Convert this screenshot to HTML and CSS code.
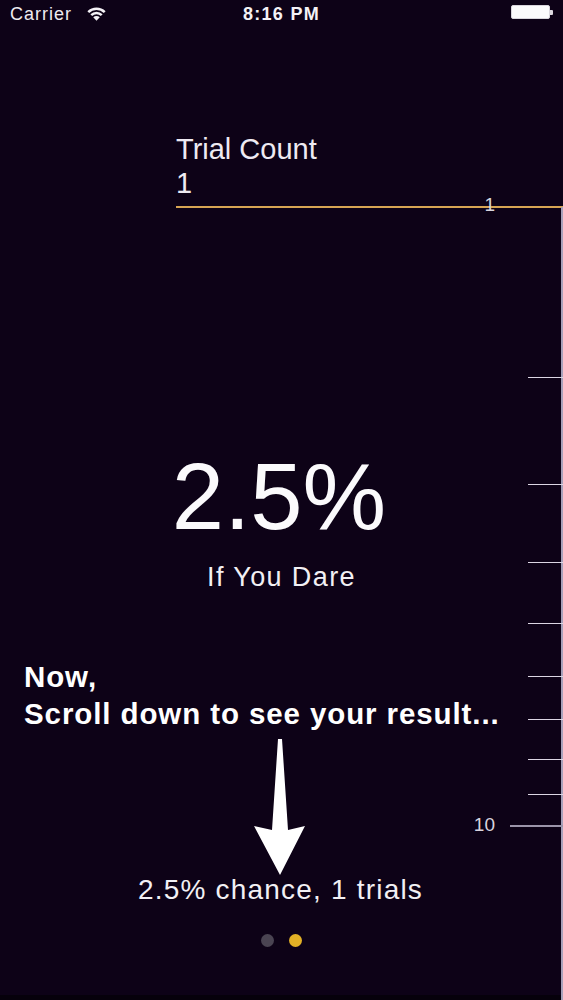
FILE: index.html
```html
<!DOCTYPE html>
<html lang="en">
<head>
<meta charset="utf-8">
<title>Trial Count</title>
<link rel="stylesheet" href="styles.css">
</head>
<body>
<div class="screen">
  <div class="status">
    <div class="status-left">
      <span class="carrier">Carrier</span>
      <svg class="wifi" width="19" height="15" viewBox="0 0 18 14">
        <path d="M9 13.8 L5.9 10.6 A4.4 4.4 0 0 1 12.1 10.6 Z" fill="#f4f2f6"/>
        <path d="M4.05 8.55 A7 7 0 0 1 13.95 8.55" fill="none" stroke="#f4f2f6" stroke-width="2.4"/>
        <path d="M1.22 5.72 A11 11 0 0 1 16.78 5.72" fill="none" stroke="#f4f2f6" stroke-width="2.4"/>
      </svg>
    </div>
    <div class="time">8:16 PM</div>
    <div class="status-right">
      <div class="battery"><div class="battery-body"></div><div class="battery-nub"></div></div>
    </div>
  </div>

  <div class="field">
    <div class="field-label">Trial Count</div>
    <div class="field-value">1</div>
  </div>

  <div class="big">2.5%</div>
  <div class="caption">If You Dare</div>

  <div class="hint">Now,<br>Scroll down to see your result...</div>

  <svg class="arrow" width="60" height="136" viewBox="0 0 60 136">
    <polygon points="28,0 32,0 38,91 55,87 30,136 4,87 22,91" fill="#ffffff"/>
  </svg>

  <div class="summary">2.5% chance, 1 trials</div>

  <div class="dots">
    <span class="dot"></span>
    <span class="dot active"></span>
  </div>

  <div class="bottom-edge"></div>

  <div class="ruler">
    <div class="ruler-line"></div>
    <span class="ruler-label" style="top:205px">1</span>
    <div class="tick" style="top:377px"></div>
    <div class="tick" style="top:484px"></div>
    <div class="tick" style="top:562px"></div>
    <div class="tick" style="top:623px"></div>
    <div class="tick" style="top:676px"></div>
    <div class="tick" style="top:719px"></div>
    <div class="tick" style="top:759px"></div>
    <div class="tick" style="top:794px"></div>
    <div class="tick major" style="top:825px"></div>
    <span class="ruler-label" style="top:825px">10</span>
  </div>
</div>
</body>
</html>
```

FILE: styles.css
```css
* { box-sizing: border-box; }

html, body {
  margin: 0;
  padding: 0;
  background: #0d0217;
}

.screen {
  position: relative;
  width: 563px;
  height: 1000px;
  overflow: hidden;
  background: #0d0217;
  color: #f4f2f6;
  font-family: "Liberation Sans", Arial, sans-serif;
  display: flex;
  flex-direction: column;
}

/* status bar */
.status {
  display: grid;
  grid-template-columns: 1fr auto 1fr;
  align-items: center;
  padding: 4px 10px 0 10px;
  height: 24px;
}
.status-left {
  display: flex;
  align-items: center;
  gap: 15px;
}
.carrier {
  font-size: 18px;
  line-height: 20px;
  letter-spacing: 1px;
  color: #eeebf1;
}
.wifi { margin-top: -2px; }
.time {
  font-size: 18px;
  line-height: 20px;
  font-weight: bold;
  letter-spacing: 1.3px;
  color: #f4f2f6;
}
.status-right {
  display: flex;
  justify-content: flex-end;
}
.battery {
  display: flex;
  align-items: center;
  margin-top: -4px;
}
.battery-body {
  width: 39px;
  height: 14px;
  border-radius: 2px;
  background: #fbfafc;
  border: 1px solid #d8d4dc;
}
.battery-nub {
  width: 3px;
  height: 5px;
  background: #dcd8e0;
  border-radius: 0 1px 1px 0;
}

/* field */
.field {
  margin: 108px 0 0 176px;
  padding-bottom: 6px;
  border-bottom: 2px solid #d6a453;
}
.field-label,
.field-value {
  font-size: 29px;
  line-height: 34px;
  color: #eeeaf2;
}

/* result */
.big {
  margin-top: 239px;
  text-align: center;
  font-size: 94px;
  line-height: 100px;
  padding-right: 5px;
  color: #fbfafc;
}
.caption {
  margin-top: 15px;
  text-align: center;
  font-size: 27px;
  line-height: 30px;
  letter-spacing: 1.4px;
  color: #f2f0f4;
}

.hint {
  margin: 66px 0 0 24px;
  font-size: 29.5px;
  line-height: 37px;
  font-weight: bold;
  letter-spacing: 0.9px;
  color: #ffffff;
  position: relative;
  z-index: 1;
}

.arrow {
  display: block;
  margin: 7px auto 0 auto;
  position: relative;
  left: -2px;
}

.summary {
  margin-top: -1px;
  text-align: center;
  font-size: 28px;
  line-height: 32px;
  letter-spacing: 1.2px;
  color: #f2f0f4;
  padding-right: 2px;
}

.dots {
  margin-top: 28px;
  display: flex;
  justify-content: center;
  gap: 15px;
}
.dot {
  width: 13px;
  height: 13px;
  border-radius: 50%;
  background: #4a4452;
}
.dot.active {
  background: #e2b126;
}

.bottom-edge {
  margin-top: auto;
  height: 5px;
  background: #06010b;
}

/* ruler */
.ruler {
  position: absolute;
  top: 0;
  right: 0;
  width: 110px;
  height: 1000px;
}
.ruler-line {
  position: absolute;
  right: 0;
  top: 207px;
  bottom: 0;
  width: 2px;
  background: #a9a2bb;
}
.tick {
  position: absolute;
  right: 0;
  width: 35px;
  height: 1px;
  background: #dcd6e4;
}
.tick.major {
  width: 53px;
  height: 2px;
  background: #9b94aa;
}
.ruler-label {
  position: absolute;
  right: 68px;
  transform: translateY(-50%);
  font-size: 19px;
  line-height: 20px;
  color: #d8d4de;
}
```
